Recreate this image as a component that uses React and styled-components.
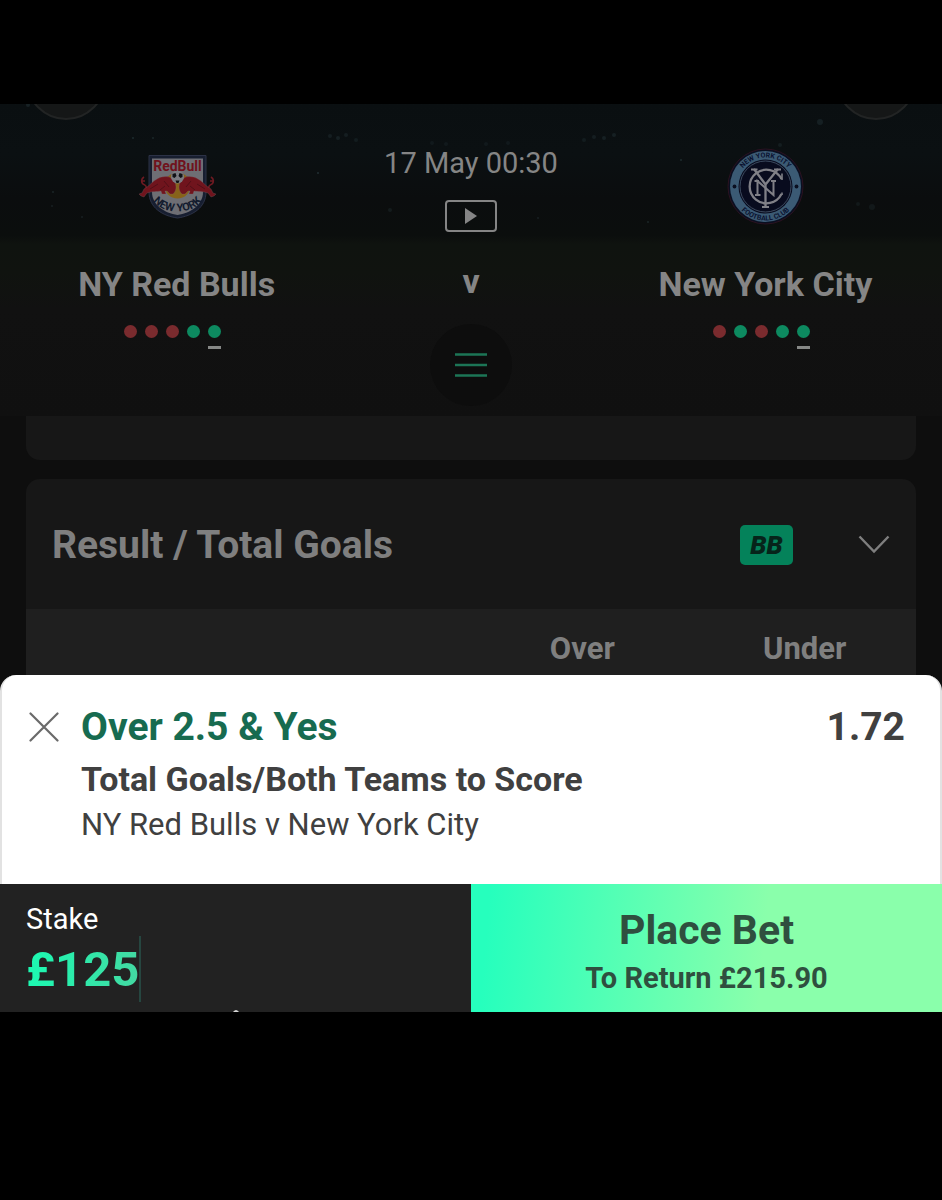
import React, { useState } from 'react';
import styled, { createGlobalStyle } from 'styled-components';

function App() {
  const [stake, setStake] = useState('£125');

  return (
    <>
      <GlobalStyle />
      <Screen>
        <Hero>
          <StadiumLights />
          <HeroNav>
            <RoundButton type="button" aria-label="Back" />
            <RoundButton type="button" aria-label="Account" />
          </HeroNav>
          <Scoreboard>
            <Team>
              <RedBullsCrest />
              <TeamName>NY Red Bulls</TeamName>
              <Form results={['L', 'L', 'L', 'W', 'W']} />
            </Team>
            <MatchInfo>
              <KickOff>17 May 00:30</KickOff>
              <StreamButton type="button" aria-label="Watch live">
                <svg width="12" height="16" viewBox="0 0 12 16">
                  <path d="M0 0L12 8L0 16Z" fill="currentColor" />
                </svg>
              </StreamButton>
              <Versus>v</Versus>
              <MenuButton type="button" aria-label="Menu">
                <svg width="32" height="24" viewBox="0 0 32 24">
                  <path
                    d="M0 1.5H32M0 12H32M0 22.5H32"
                    stroke="currentColor"
                    strokeWidth="2.6"
                  />
                </svg>
              </MenuButton>
            </MatchInfo>
            <Team>
              <NewYorkCityCrest />
              <TeamName>New York City</TeamName>
              <Form results={['L', 'W', 'L', 'W', 'W']} />
            </Team>
          </Scoreboard>
        </Hero>

        <Markets>
          <PreviousMarket />
          <Market>
            <MarketHeader>
              <MarketTitle>Result / Total Goals</MarketTitle>
              <BetBuilderBadge>BB</BetBuilderBadge>
              <CollapseButton type="button" aria-label="Collapse market">
                <svg width="32" height="20" viewBox="0 0 32 20" fill="none">
                  <path
                    d="M1.5 1.5L16 16.5L30.5 1.5"
                    stroke="currentColor"
                    strokeWidth="2.4"
                  />
                </svg>
              </CollapseButton>
            </MarketHeader>
            <OddsTable>
              <thead>
                <tr>
                  <EmptyCell />
                  <OddsHeading scope="col">Over</OddsHeading>
                  <OddsHeading scope="col">Under</OddsHeading>
                </tr>
              </thead>
            </OddsTable>
          </Market>
        </Markets>

        <BetSlip>
          <Selection>
            <RemoveButton type="button" aria-label="Remove selection">
              <svg width="30" height="30" viewBox="0 0 30 30" fill="none">
                <path
                  d="M1.5 1.5L28.5 28.5M28.5 1.5L1.5 28.5"
                  stroke="currentColor"
                  strokeWidth="2.2"
                  strokeLinecap="round"
                />
              </svg>
            </RemoveButton>
            <SelectionText>
              <SelectionName>Over 2.5 &amp; Yes</SelectionName>
              <SelectionMarket>Total Goals/Both Teams to Score</SelectionMarket>
              <SelectionFixture>NY Red Bulls v New York City</SelectionFixture>
            </SelectionText>
            <Odds>1.72</Odds>
          </Selection>
          <Actions>
            <StakePanel>
              <StakeLabel htmlFor="stake">Stake</StakeLabel>
              <StakeRow>
                <StakeInput
                  id="stake"
                  inputMode="decimal"
                  value={stake}
                  onChange={e => setStake(e.target.value)}
                />
                <Cursor />
              </StakeRow>
              <Handle width="6" height="2" viewBox="0 0 6 2">
                <path d="M0 2Q1 0.5 3 0Q5 0.5 6 2Z" fill="#d8d8d8" />
              </Handle>
            </StakePanel>
            <PlaceBet type="button">
              <PlaceBetTitle>Place Bet</PlaceBetTitle>
              <PlaceBetReturn>To Return £215.90</PlaceBetReturn>
            </PlaceBet>
          </Actions>
        </BetSlip>
      </Screen>
    </>
  );
}

function Form({ results }) {
  return (
    <FormList>
      {results.map((result, i) => (
        <FormDot key={i} $won={result === 'W'} $latest={i === results.length - 1} />
      ))}
    </FormList>
  );
}

function StadiumLights() {
  return (
    <Lights viewBox="0 0 942 312" preserveAspectRatio="none">
      {LIGHTS.map(([x, y, r, opacity]) => (
        <circle key={`${x}-${y}`} cx={x} cy={y} r={r} fill="#4a6a72" opacity={opacity} />
      ))}
    </Lights>
  );
}

const BULL =
  'M1 46L4 45L6 41L9 39C12 37 15 33 19 31C24 28 30 28 33 30C36 32 38 35 38 39C38 42 37 44 35 46L32 46L29 43L27 43L28 46L24 46L23 43C19 44 14 43 9 45L6 49L3 48Z';
const BULL_TAIL = 'M8 40C9 38 7 37 5 36C3 34 3 31 6 29M4 33L7 33';

function RedBullsCrest() {
  return (
    <svg width="78" height="78" viewBox="0 0 78 78">
      <path
        d="M11 7.5H68V44C68 60 54 68 39.5 70C25 68 11 60 11 44Z"
        fill="#171e30"
        stroke="#2c3246"
        strokeWidth="1"
      />
      <path
        d="M14 10.5H65V44C65 57 52.5 65 39.5 67C26.500 65 14 57 14 44Z"
        fill="#6e6e74"
      />
      <circle cx="39.5" cy="37.5" r="13" fill="#87631a" />
      {[undefined, 'translate(79 0) scale(-1 1)'].map((transform, i) => (
        <g key={i} transform={transform}>
          <path d={BULL_TAIL} fill="none" stroke="#6f1a22" strokeWidth="1.6" />
          <path d={BULL} fill="#70141d" stroke="#806468" strokeWidth="0.3" />
          <path d="M12 41L20 36M26 33L31 39M22 42L27 38" stroke="#4a0e15" strokeWidth="0.8" />
        </g>
      ))}
      <circle cx="39.5" cy="29" r="6.5" fill="#7c7c82" />
      <path
        d="M34.500 26l3 -1l1 3l-2 2l-2 -1zM41.500 25l3 1l0 3l-2 1l-2 -2zM37.500 32.500l4 0l-1 2.500l-2 0z"
        fill="#101216"
      />
      <CrestText x="39.5" y="22.5" fontSize="14" fill="#70121c" textAnchor="middle">
        RedBull
      </CrestText>
      <path id="redBullsArc" d="M12 48Q20 63.500 39.5 63.500Q59 63.500 67 48" fill="none" />
      <CrestText fontSize="11" fill="#131b2e" textAnchor="middle">
        <textPath href="#redBullsArc" startOffset="50%">
          NEW YORK
        </textPath>
      </CrestText>
    </svg>
  );
}

function NewYorkCityCrest() {
  return (
    <svg width="78" height="78" viewBox="0 0 78 78">
      <circle cx="39.5" cy="38.5" r="37.5" fill="#0a0f20" stroke="#2b1220" strokeWidth="1" />
      <circle cx="39.5" cy="38.5" r="35.5" fill="#3b5a74" />
      <circle cx="39.5" cy="38.5" r="27" fill="#080b1e" />
      <circle cx="39.5" cy="38.5" r="25.5" fill="none" stroke="#4a5a70" strokeWidth="0.8" />
      <circle cx="8.5" cy="38.5" r="1.9" fill="#0a0f20" />
      <circle cx="70.5" cy="38.5" r="1.9" fill="#0a0f20" />
      <path id="nycTop" d="M10.5 38.5A29 29 0 0 1 68.5 38.5" fill="none" />
      <path id="nycBottom" d="M5.5 38.5A34 34 0 0 0 73.5 38.5" fill="none" />
      <CrestText fontSize="7" fill="#0a1230" textAnchor="middle">
        <textPath href="#nycTop" startOffset="50%">
          NEW YORK CITY
        </textPath>
      </CrestText>
      <CrestText fontSize="7" fill="#0a1230" textAnchor="middle">
        <textPath href="#nycBottom" startOffset="50%">
          FOOTBALL CLUB
        </textPath>
      </CrestText>
      <g fill="none" stroke="#808087" strokeWidth="2.3">
        <path d="M55.5 31A16.800 16.800 0 1 0 55.5 46" />
        <path d="M56 25.500V32M56 44.500V47" strokeWidth="1.6" />
        <path d="M28 21L39.5 36.500V59M52 21L39.500 36.5" />
        <path d="M25 21.500H31.500M48 21.500H55M36 59H43" strokeWidth="2" />
        <path d="M31.500 47V33L47.500 47V33M28.500 33H33M45 33H50M29 47H34.500" strokeWidth="2" />
      </g>
    </svg>
  );
}

// x, y, radius, opacity
const LIGHTS = [
  [330, 32, 2, 0.16],
  [338, 34, 2, 0.18],
  [346, 31, 2, 0.16],
  [356, 36, 2, 0.14],
  [432, 39, 2, 0.1],
  [446, 40, 2, 0.1],
  [486, 40, 2, 0.1],
  [508, 39, 2, 0.1],
  [584, 36, 2, 0.14],
  [594, 33, 2, 0.16],
  [604, 34, 2, 0.18],
  [614, 31, 2, 0.18],
  [28, 1, 2, 0.2],
  [133, 34, 1, 0.3],
  [153, 34, 1, 0.25],
  [53, 88, 1, 0.25],
  [52, 102, 1, 0.2],
  [82, 113, 1, 0.2],
  [318, 69, 1, 0.35],
  [390, 106, 2, 0.15],
  [538, 114, 1, 0.2],
  [681, 56, 1, 0.3],
  [648, 118, 1, 0.25],
  [780, 41, 2, 0.15],
  [820, 18, 3, 0.18],
  [858, 100, 2, 0.12],
  [872, 103, 3, 0.12],
];

const GlobalStyle = createGlobalStyle`
  * {
    box-sizing: border-box;
  }

  body {
    margin: 0;
    background-color: #000000;
    font-family: Roboto, 'Liberation Sans', sans-serif;
  }

  button {
    padding: 0;
    border: 0;
    background: none;
    font-family: inherit;
  }
`;

const Screen = styled.main`
  padding: 104px 0;
`;

const Hero = styled.header`
  position: relative;
  padding-bottom: 10px;
  background: linear-gradient(
    #0a0f11 0%,
    #0b1012 16%,
    #0b0d0e 30%,
    #0b0e0d 42%,
    #0f130f 45%,
    #10130f 54%,
    #111111 66%,
    #101010 100%
  );
`;

const Lights = styled.svg`
  position: absolute;
  inset: 0;
  width: 100%;
  height: 100%;
`;

const HeroNav = styled.nav`
  position: relative;
  display: flex;
  justify-content: space-between;
  align-items: flex-end;
  height: 16px;
  padding: 0 26px;
  overflow: hidden;
`;

const RoundButton = styled.button`
  flex-shrink: 0;
  width: 80px;
  height: 80px;
  border: 2px solid #222424;
  border-radius: 50%;
  background-color: #151717;
`;

const Scoreboard = styled.div`
  position: relative;
  display: grid;
  grid-template-columns: 3fr 2fr 3fr;
`;

const Team = styled.div`
  display: flex;
  flex-direction: column;
  align-items: center;
  padding-top: 28px;
`;

const TeamName = styled.h2`
  margin: 38px 0 0;
  font-size: 34px;
  font-weight: 700;
  line-height: 40px;
  color: #858585;
`;

const FormList = styled.div`
  display: flex;
  margin-top: 21px;
`;

const FormDot = styled.span`
  height: 24px;
  margin-right: 8px;
  border-bottom: 3px solid ${({ $latest }) => ($latest ? '#868886' : 'transparent')};

  &::before {
    content: '';
    display: block;
    width: 13px;
    height: 13px;
    border-radius: 50%;
    background-color: ${({ $won }) => ($won ? '#0d8a60' : '#7a2b2e')};
  }
`;

const CrestText = styled.text`
  font-weight: 700;
`;

const MatchInfo = styled.div`
  display: flex;
  flex-direction: column;
  align-items: center;
  padding-top: 26px;
`;

const KickOff = styled.time`
  font-size: 29px;
  line-height: 34px;
  color: #858585;
`;

const StreamButton = styled.button`
  display: flex;
  justify-content: center;
  align-items: center;
  width: 52px;
  height: 32px;
  margin-top: 20px;
  border: 2px solid #858585;
  border-radius: 4px;
  color: #858585;
`;

const Versus = styled.span`
  margin-top: 32px;
  font-size: 34px;
  font-weight: 700;
  line-height: 34px;
  color: #858585;
`;

const MenuButton = styled.button`
  display: flex;
  justify-content: center;
  align-items: center;
  width: 82px;
  height: 82px;
  margin-top: 26px;
  border-radius: 50%;
  background-color: #0d0d0d;
  color: #1c7556;
`;

const Markets = styled.section`
  padding: 0 26px;
  background-color: #0e0e0e;
`;

const PreviousMarket = styled.div`
  height: 44px;
  border-radius: 0 0 14px 14px;
  background-color: #171717;
`;

const Market = styled.article`
  margin-top: 19px;
  border-radius: 14px 14px 0 0;
  background-color: #171717;
`;

const MarketHeader = styled.div`
  display: flex;
  align-items: center;
  height: 130px;
  padding: 2px 26px 0;
`;

const MarketTitle = styled.h3`
  flex: 1;
  margin: 0;
  font-size: 39px;
  font-weight: 700;
  line-height: 48px;
  color: #7f7f7f;
`;

const BetBuilderBadge = styled.span`
  width: 53px;
  margin-right: 65px;
  border-radius: 5px;
  background-color: #04825a;
  font-size: 26px;
  font-style: italic;
  font-weight: 900;
  line-height: 40px;
  text-align: center;
  color: #06241a;
`;

const CollapseButton = styled.button`
  display: flex;
  color: #7f7f7f;
`;

const OddsTable = styled.table`
  width: 100%;
  border-collapse: collapse;
  table-layout: fixed;
  background-color: #1f1f1f;
`;

const EmptyCell = styled.td`
  width: 50%;
`;

const OddsHeading = styled.th`
  padding: 21px 0 7px;
  font-size: 31px;
  font-weight: 700;
  line-height: 38px;
  color: #7f7f7f;
`;

const BetSlip = styled.section`
  background-color: #0e0e0e;
`;

const Selection = styled.div`
  display: flex;
  align-items: flex-start;
  padding: 28px 35px 41px 27px;
  border: solid #e2e2e2;
  border-width: 0 2px;
  border-radius: 16px 16px 0 0;
  background-color: #ffffff;
  color: #404040;
`;

const RemoveButton = styled.button`
  display: flex;
  align-items: center;
  height: 48px;
  color: #6a6a6a;
`;

const SelectionText = styled.div`
  flex: 1;
  display: flex;
  flex-direction: column;
  gap: 4px;
  padding-left: 22px;
`;

const SelectionName = styled.strong`
  font-size: 39px;
  font-weight: 700;
  line-height: 48px;
  color: #176b50;
`;

const SelectionMarket = styled.span`
  font-size: 34px;
  font-weight: 700;
  line-height: 48px;
`;

const SelectionFixture = styled.span`
  font-size: 31px;
  line-height: 36px;
`;

const Odds = styled.strong`
  font-size: 39px;
  font-weight: 700;
  line-height: 48px;
`;

const Actions = styled.div`
  display: grid;
  grid-template-columns: 1fr 1fr;
`;

const StakePanel = styled.div`
  position: relative;
  padding: 18px 26px 10px;
  background-color: #222222;
`;

const StakeLabel = styled.label`
  display: block;
  font-size: 29px;
  line-height: 34px;
  color: #ffffff;
`;

const StakeRow = styled.div`
  display: flex;
`;

const StakeInput = styled.input`
  width: 113px;
  height: 66px;
  padding: 0;
  border: 0;
  outline: 0;
  background: linear-gradient(90deg, #1bfab2, #43d9a2);
  background-clip: text;
  font-family: inherit;
  font-size: 49px;
  font-weight: 700;
  color: transparent;
`;

const Cursor = styled.span`
  width: 2px;
  background-color: #264640;
`;

const Handle = styled.svg`
  position: absolute;
  bottom: 0;
  left: 50%;
  transform: translateX(-50%);
`;

const PlaceBet = styled.button`
  display: flex;
  flex-direction: column;
  align-items: center;
  padding: 20px 0 12px;
  background: linear-gradient(95deg, #26ffbd 4%, #8affab 62%);
  color: #2f4f3f;
`;

const PlaceBetTitle = styled.span`
  font-size: 41px;
  font-weight: 700;
  line-height: 52px;
`;

const PlaceBetReturn = styled.span`
  font-size: 29px;
  font-weight: 700;
  line-height: 44px;
`;

export default App;
